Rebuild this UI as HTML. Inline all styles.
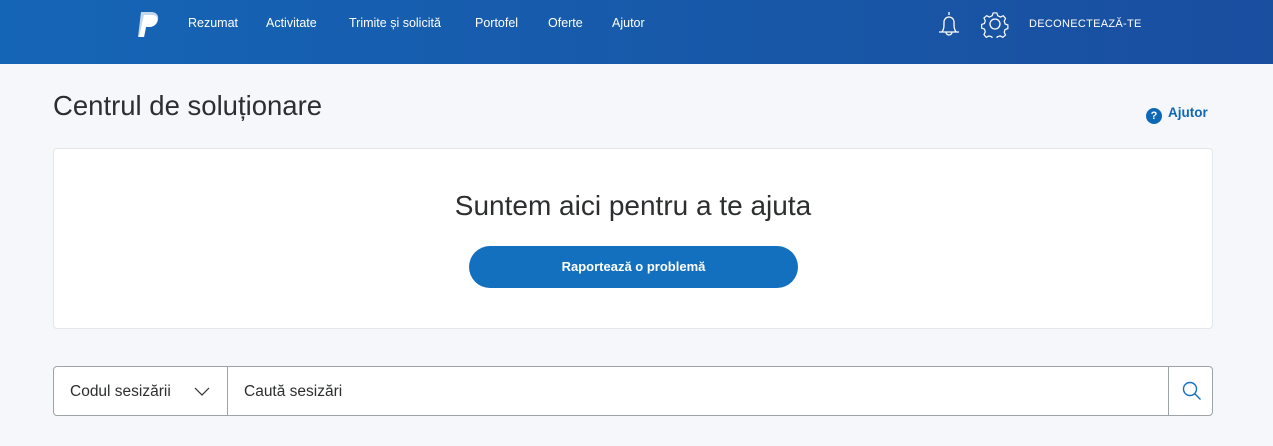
<!DOCTYPE html>
<html><head><meta charset="utf-8"><style>
*{margin:0;padding:0;box-sizing:border-box}
body{width:1273px;height:446px;overflow:hidden;background:#f5f7fa;font-family:"Liberation Sans",sans-serif;position:relative}
.hdr{position:absolute;left:0;top:0;width:1273px;height:64px;background:linear-gradient(90deg,#1565b6,#1a4e9f)}
.nav{position:absolute;top:16px;color:#fff;font-size:12.5px}
h1{position:absolute;left:53px;top:90px;font-weight:normal;font-size:27.5px;color:#2c2e2f}
.help{position:absolute;left:1146px;top:105px;color:#0e68b5;font-weight:bold;font-size:13.5px}
.help span{display:inline-block;width:16px;height:16px;border-radius:50%;background:#0e68b5;color:#fff;font-size:11px;text-align:center;line-height:16px;margin-right:6px;vertical-align:-2px}
.card{position:absolute;left:53px;top:148px;width:1160px;height:181px;background:#fff;border:1px solid #e3e6ea;border-radius:4px}
.card h2{position:absolute;left:0;right:0;top:41px;text-align:center;font-weight:normal;font-size:28px;color:#2c2e2f}
.btn{position:absolute;left:415px;top:97px;width:329px;height:42px;border-radius:21px;background:#1370bf;color:#fff;font-weight:bold;font-size:13px;text-align:center;line-height:42px}
.search{position:absolute;left:53px;top:366px;width:1160px;height:50px;background:#fff;border:1px solid #9da3a6;border-radius:4px}
.sel{position:absolute;left:0;top:0;width:174px;height:48px;border-right:1px solid #9da3a6;font-size:15.5px;color:#2c2e2f;padding:16px 0 0 16px}
.inp{position:absolute;left:190px;top:16px;font-size:15.5px;color:#2c2e2f}
.sb{position:absolute;left:1114px;top:0;width:1px;height:48px;background:#9da3a6}
</style></head><body>
<div class="hdr">
<svg style="position:absolute;left:136px;top:11px" width="26" height="28" viewBox="0 0 26 28"><path d="M5 1h10c5 0 8 3 7 8-1 5-5 7-9 7h-3l-2 10H2z" fill="#fff" opacity=".75"/><path d="M8 4h8c4 0 6 2 5 6-1 4-4 6-8 6h-3l-2 10H3z" fill="#fff"/></svg>
<div class="nav" style="left:188px">Rezumat</div>
<div class="nav" style="left:266px">Activitate</div>
<div class="nav" style="left:349px">Trimite și solicită</div>
<div class="nav" style="left:475px">Portofel</div>
<div class="nav" style="left:548px">Oferte</div>
<div class="nav" style="left:612px">Ajutor</div>
<svg style="position:absolute;left:936px;top:10px" width="26" height="28" viewBox="0 0 26 28" fill="none" stroke="#fff" stroke-width="1.3"><path d="M13 2v3M6 22c2-3 2-5 2-10a5 5 0 0 1 10 0c0 5 0 7 2 10zM3 22h20M10 22a3 3 0 0 0 6 0"/></svg>
<svg style="position:absolute;left:981px;top:10px" width="28" height="28" viewBox="0 0 28 28" fill="none" stroke="#fff" stroke-width="1.3"><circle cx="14" cy="14" r="5"/><path d="M12 2h4l1 3 3 1.5 3-1.5 2.5 3-1.5 3 1 3 3 1v4l-3 1-1 3 1.5 3-3 2.5-3-1.5-3 1-1 3h-4l-1-3-3-1-3 1.5-2.5-3 1.5-3-1-3-3-1v-4l3-1 1-3-1.5-3 3-2.5 3 1.5 3-1.5z" transform="scale(.92) translate(1.2 1.2)"/></svg>
<div class="nav" style="left:1029px;font-size:11px;top:18px;letter-spacing:.3px">DECONECTEAZĂ-TE</div>
</div>
<h1>Centrul de soluționare</h1>
<div class="help"><span>?</span>Ajutor</div>
<div class="card"><h2>Suntem aici pentru a te ajuta</h2><div class="btn">Raportează o problemă</div></div>
<div class="search">
<div class="sel">Codul sesizării<svg style="position:absolute;left:140px;top:20px" width="16" height="9" viewBox="0 0 16 9" fill="none" stroke="#2c2e2f" stroke-width="1.2"><path d="M1 1l7 7 7-7"/></svg></div>
<div class="inp">Caută sesizări</div>
<div class="sb"></div>
<svg style="position:absolute;left:1127px;top:13px" width="22" height="22" viewBox="0 0 22 22" fill="none" stroke="#1370bf" stroke-width="1.4"><circle cx="9" cy="9" r="6.5"/><path d="M13.5 13.5l6 6"/></svg>
</div>
</body></html>
